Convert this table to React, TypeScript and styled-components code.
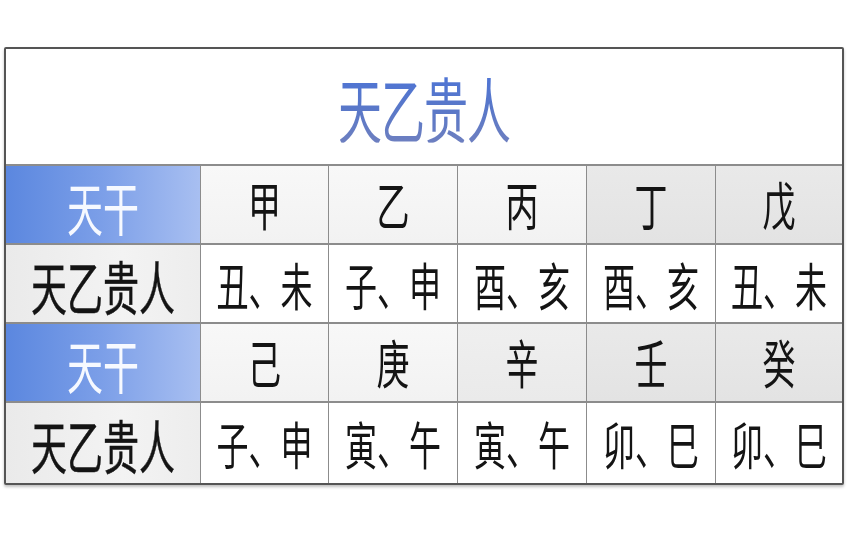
import React from "react";
import styled, { createGlobalStyle } from "styled-components";

const Global = createGlobalStyle`
  html, body { margin: 0; padding: 0; background: #ffffff; }
  body { font-family: "Noto Sans CJK SC", "Noto Sans", sans-serif; }
`;

const Page = styled.div`
  width: 854px;
  height: 541px;
  padding: 47px 0 0 4px;
  box-sizing: border-box;
`;

const Table = styled.div`
  width: 840px;
  box-sizing: border-box;
  border: 2px solid #555555;
  border-radius: 2px;
  box-shadow: 0 2px 3px rgba(0, 0, 0, 0.25);
  display: grid;
  grid-template-columns: 195px 128px 129px 129px 129px 1fr;
  grid-template-rows: 117px 79px 79px 79px 80px;
  background: #fff;
`;

const TitleCell = styled.div`
  grid-column: 1 / -1;
  display: flex;
  align-items: center;
  justify-content: center;
  border-bottom: 2px solid #8c8c8c;
  background: #fff;
`;

const Stretch = styled.span<{ $size: number; $stroke?: number; $color?: string }>`
  display: inline-block;
  font-size: ${(p) => p.$size}px;
  font-weight: 400;
  color: ${(p) => p.$color ?? "#141414"};
  -webkit-text-stroke: ${(p) => p.$stroke ?? 0}px ${(p) => p.$color ?? "#141414"};
  line-height: 1;
  white-space: nowrap;
  transform: scaleY(1.6);
`;

const Title = styled(Stretch)`
  background: linear-gradient(180deg, #4d74d6 0%, #5a78c8 55%, #6d7fc0 100%);
  -webkit-background-clip: text;
  background-clip: text;
  color: transparent;
  -webkit-text-stroke: 0;
  letter-spacing: -1px;
  transform: scaleY(1.62);
`;

type Tone = "blue" | "label" | "light" | "mid" | "dark" | "white";

const toneBg: Record<Tone, string> = {
  blue: "linear-gradient(90deg, #5b87df 0%, #7c9fe8 50%, #a8bff1 100%)",
  label: "linear-gradient(90deg, #eaeaea 0%, #f3f3f3 60%, #ededed 100%)",
  light: "linear-gradient(180deg, #f8f8f8 0%, #f2f2f2 100%)",
  mid: "linear-gradient(180deg, #efefef 0%, #eaeaea 100%)",
  dark: "linear-gradient(180deg, #e9e9e9 0%, #e3e3e3 100%)",
  white: "#ffffff",
};

const Cell = styled.div<{ $tone: Tone; $last?: boolean; $bottom?: boolean }>`
  display: flex;
  align-items: center;
  justify-content: center;
  background: ${(p) => toneBg[p.$tone]};
  border-right: ${(p) => (p.$last ? "none" : "1px solid #8c8c8c")};
  border-bottom: ${(p) => (p.$bottom ? "none" : "2px solid #8c8c8c")};
`;

const stems1 = ["甲", "乙", "丙", "丁", "戊"];
const nobles1 = ["丑、未", "子、申", "酉、亥", "酉、亥", "丑、未"];
const stems2 = ["己", "庚", "辛", "壬", "癸"];
const nobles2 = ["子、申", "寅、午", "寅、午", "卯、巳", "卯、巳"];
const tones1: Tone[] = ["light", "light", "light", "dark", "dark"];
const tones2: Tone[] = ["light", "light", "mid", "dark", "dark"];

function StemRow({ stems, tones }: { stems: string[]; tones: Tone[] }) {
  return (
    <>
      <Cell $tone="blue">
        <Stretch $size={36} $color="#f6f9ff">天干</Stretch>
      </Cell>
      {stems.map((s, i) => (
        <Cell key={s} $tone={tones[i]} $last={i === stems.length - 1}>
          <Stretch $size={33}>{s}</Stretch>
        </Cell>
      ))}
    </>
  );
}

function NobleRow({ items, bottom }: { items: string[]; bottom?: boolean }) {
  return (
    <>
      <Cell $tone="label" $bottom={bottom}>
        <Stretch $size={36} $stroke={0.3}>天乙贵人</Stretch>
      </Cell>
      {items.map((s, i) => (
        <Cell key={i} $tone="white" $last={i === items.length - 1} $bottom={bottom}>
          <Stretch $size={32}>{s}</Stretch>
        </Cell>
      ))}
    </>
  );
}

export default function App() {
  return (
    <>
      <Global />
      <Page>
        <Table>
          <TitleCell>
            <Title $size={44}>天乙贵人</Title>
          </TitleCell>
          <StemRow stems={stems1} tones={tones1} />
          <NobleRow items={nobles1} />
          <StemRow stems={stems2} tones={tones2} />
          <NobleRow items={nobles2} bottom />
        </Table>
      </Page>
    </>
  );
}
